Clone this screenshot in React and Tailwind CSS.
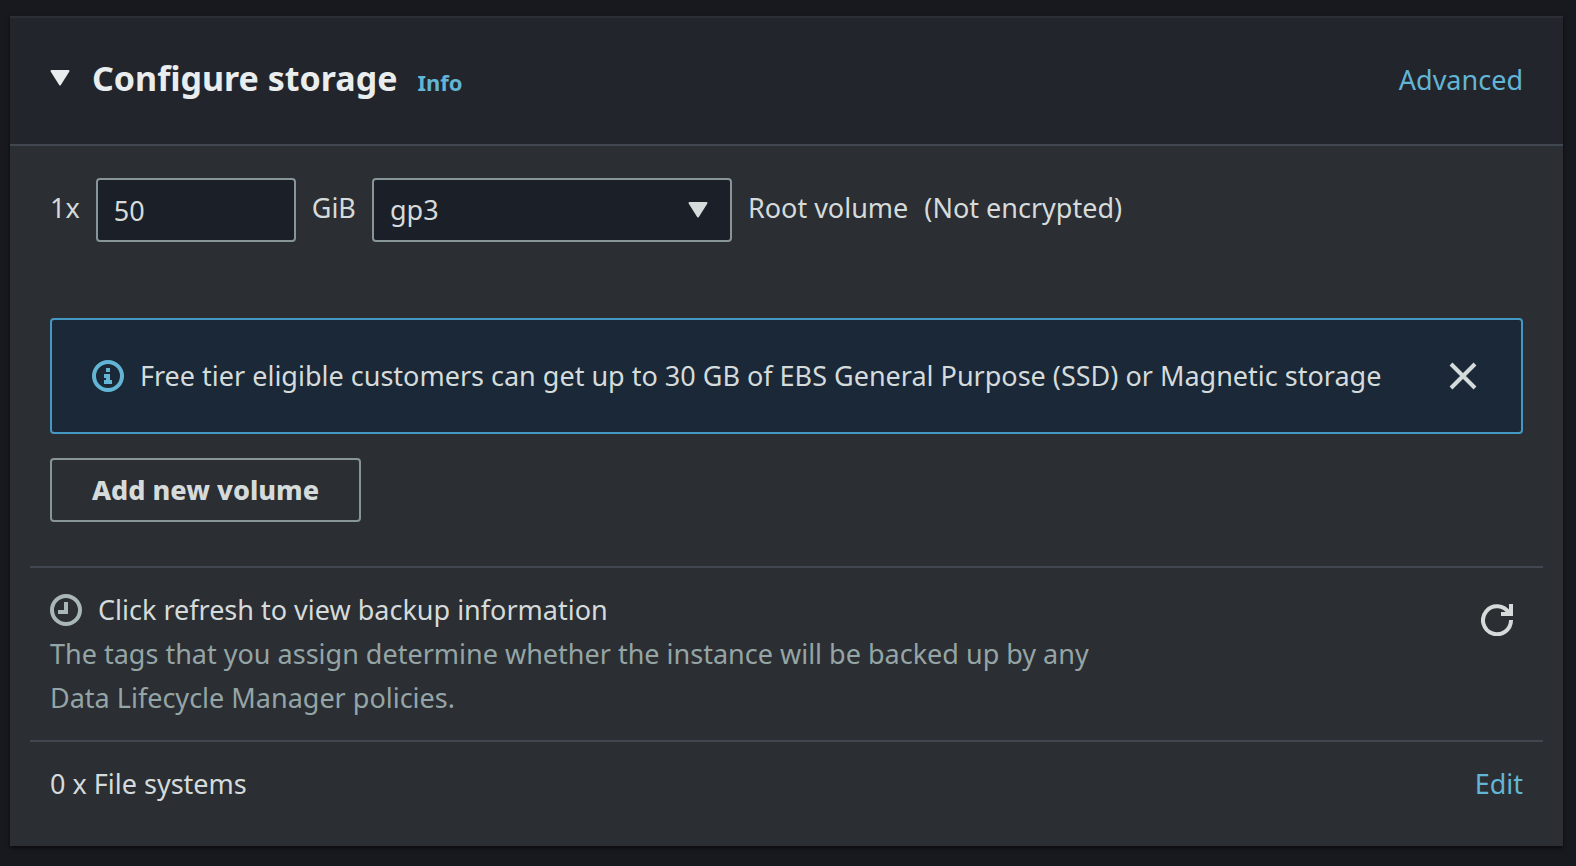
import React from 'react';

function Caret({ className }) {
  return (
    <svg viewBox="0 0 20 16" className={className} aria-hidden="true">
      <path d="M1.5 1h17L10 14.5z" fill="currentColor" stroke="currentColor" strokeWidth="2" strokeLinejoin="round" />
    </svg>
  );
}

function InfoIcon() {
  return (
    <svg viewBox="0 0 32 32" className="size-8 shrink-0 text-[#62b5d5]" aria-hidden="true">
      <circle cx="16" cy="16" r="14" fill="none" stroke="currentColor" strokeWidth="4" />
      <path d="M14 8h4v4h-4zM12 14h6v6h2v4h-8v-4h2v-2h-2z" fill="currentColor" />
    </svg>
  );
}

function CloseIcon() {
  return (
    <svg viewBox="0 0 28 28" className="size-7" aria-hidden="true">
      <path d="M2 2l24 24M26 2L2 26" fill="none" stroke="currentColor" strokeWidth="4" />
    </svg>
  );
}

function ClockIcon() {
  return (
    <svg viewBox="0 0 32 32" className="size-8 shrink-0 text-[#aab7b8]" aria-hidden="true">
      <circle cx="16" cy="16" r="14" fill="none" stroke="currentColor" strokeWidth="4" />
      <path d="M16 8v10H8" fill="none" stroke="currentColor" strokeWidth="4" />
    </svg>
  );
}

function RefreshIcon() {
  return (
    <svg viewBox="0 0 32 32" className="size-8" aria-hidden="true">
      <path d="M30 16A14 14 0 1 1 28 9" fill="none" stroke="currentColor" strokeWidth="4" />
      <path d="M30 0v10H20" fill="none" stroke="currentColor" strokeWidth="4" />
    </svg>
  );
}

export default function App() {
  return (
    <div className="min-h-screen bg-[#18191e] pt-4 pr-[13px] pb-5 pl-2.5 font-['Noto_Sans',sans-serif] text-[27px] leading-[44px] font-[440] text-[#d5dbdb]">
      <section className="border-t-2 border-[#2b2e33] bg-[#2b2e33] shadow-[0_2px_4px_rgba(0,0,0,0.6)]">
        <header className="flex items-center justify-between border-b-2 border-[#414750] bg-[#22252c] px-10 pt-[38px] pb-10">
          <div className="flex items-center pb-1">
            <button type="button" aria-label="Collapse section" className="flex text-[#eaeded]">
              <Caret className="h-4 w-5" />
            </button>
            <div className="ml-[22px] flex items-baseline gap-5">
              <h2 className="text-[34px] font-bold text-[#eaeded]">Configure storage</h2>
              <a href="#info" className="text-[22px] leading-8 font-bold text-[#62b5d5]">Info</a>
            </div>
          </div>
          <a href="#advanced" className="text-[#62b5d5]">Advanced</a>
        </header>

        <div className="flex items-center gap-4 px-10 pt-8">
          <label htmlFor="size" className="pb-1">1x</label>
          <input id="size" type="text" defaultValue="50" className="h-16 w-[200px] rounded-sm border-2 border-[#879596] bg-[#1b1f28] px-4" />
          <label htmlFor="type" className="pb-1">GiB</label>
          <div className="relative flex">
            <select id="type" className="h-16 w-[360px] appearance-none rounded-sm border-2 border-[#879596] bg-[#1b1f28] px-4">
              <option>gp3</option>
            </select>
            <Caret className="pointer-events-none absolute top-6 right-6 h-4 w-5" />
          </div>
          <span className="pb-1">Root volume</span>
          <span className="pb-1">(Not encrypted)</span>
        </div>

        <div className="px-10 pt-[76px]">
          <div role="status" className="flex items-center rounded-sm border-2 border-[#4499c2] bg-[#1a2837] px-10 py-[34px]">
            <InfoIcon />
            <p className="ml-4 flex-1 whitespace-nowrap">Free tier eligible customers can get up to 30 GB of EBS General Purpose (SSD) or Magnetic storage</p>
            <button type="button" aria-label="Dismiss" className="mr-1 flex">
              <CloseIcon />
            </button>
          </div>
          <button type="button" className="mt-6 h-16 rounded-sm border-2 border-[#879596] px-10 font-extrabold">Add new volume</button>
        </div>

        <div className="mx-5 mt-11 flex items-start justify-between border-t-2 border-[#414750] px-5 pt-5 pb-5">
          <div>
            <div className="flex items-center gap-4">
              <ClockIcon />
              <span>Click refresh to view backup information</span>
            </div>
            <p className="max-w-[1100px] text-[#95a5a6]">The tags that you assign determine whether the instance will be backed up by any Data Lifecycle Manager policies.</p>
          </div>
          <button type="button" aria-label="Refresh backup information" className="mt-4 mr-2.5 flex">
            <RefreshIcon />
          </button>
        </div>

        <div className="mx-5 flex items-center justify-between border-t-2 border-[#414750] px-5 pt-5 pb-10">
          <span>0 x File systems</span>
          <a href="#edit" className="text-[#62b5d5]">Edit</a>
        </div>
      </section>
    </div>
  );
}
